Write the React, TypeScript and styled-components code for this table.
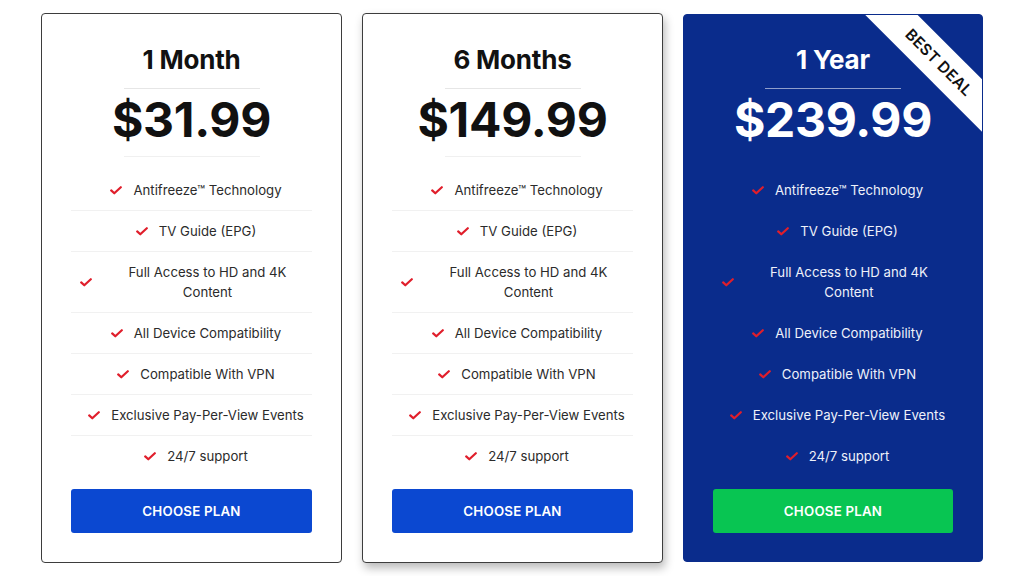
import React from "react";
import styled, { createGlobalStyle, css } from "styled-components";

const Global = createGlobalStyle`
  html, body { margin: 0; padding: 0; background: #ffffff; }
  body { font-family: Inter, "Noto Sans", "Liberation Sans", sans-serif; -webkit-font-smoothing: antialiased; }
  * { box-sizing: border-box; }
`;

const Page = styled.div`
  width: 1024px;
  height: 576px;
  padding-top: 13px;
  display: flex;
  justify-content: center;
`;

const Grid = styled.div`
  display: grid;
  grid-template-columns: 301px 301px 300px;
  column-gap: 20px;
  align-items: start;
`;

const Card = styled.div<{ $featured?: boolean; $raised?: boolean }>`
  position: relative;
  overflow: hidden;
  height: 550px;
  border-radius: 4px;
  border: 1px solid #3d3d3d;
  background: #ffffff;
  color: #111;
  padding: 30px 29px 29px;
  display: flex;
  flex-direction: column;
  align-items: center;
  ${(p) =>
    p.$raised &&
    css`
      box-shadow: 2px 5px 10px rgba(0, 0, 0, 0.28);
    `}
  ${(p) =>
    p.$featured &&
    css`
      background: #0a2c8c;
      border-color: #0a2c8c;
      color: #fff;
      margin-top: 1px;
      height: 548px;
      padding-top: 29px;
    `}
`;

const Title = styled.div`
  flex: none;
  font-size: 26px;
  font-weight: 700;
  line-height: 32px;
  letter-spacing: -0.2px;
`;

const Divider = styled.div<{ $featured?: boolean }>`
  flex: none;
  width: 136px;
  height: 1px;
  background: ${(p) => (p.$featured ? "rgba(255,255,255,0.55)" : "#e6e6e6")};
`;

const TopDivider = styled(Divider)`
  margin-top: 12px;
`;

const PriceDivider = styled(Divider)`
  margin-top: 8px;
  background: ${(p) => (p.$featured ? "transparent" : "#f0f0f0")};
`;

const Price = styled.div`
  flex: none;
  font-size: 48px;
  font-weight: 700;
  line-height: 56px;
  margin-top: 3px;
  letter-spacing: -0.3px;
`;

const List = styled.ul`
  flex: none;
  list-style: none;
  margin: 13px 0 0;
  padding: 0;
  width: 100%;
`;

const Row = styled.li<{ $featured?: boolean; $last?: boolean }>`
  display: flex;
  align-items: center;
  justify-content: center;
  gap: 11px;
  padding: 10px 0 10px 9px;
  font-size: 13.2px;
  line-height: 20px;
  color: ${(p) => (p.$featured ? "#eef1fa" : "#2b2b2b")};
  border-bottom: 1px solid
    ${(p) => (p.$last ? "transparent" : p.$featured ? "transparent" : "#f1f1f1")};
`;

const RowText = styled.span`
  text-align: center;
`;

const Check = styled.svg`
  flex: none;
  width: 12px;
  height: 9px;
`;

const Button = styled.button<{ $featured?: boolean }>`
  flex: none;
  margin-top: 12px;
  width: 100%;
  height: 44px;
  border: none;
  border-radius: 3px;
  background: ${(p) => (p.$featured ? "#08c552" : "#0b48d1")};
  color: #fff;
  font-family: inherit;
  font-size: 13.3px;
  font-weight: 600;
  letter-spacing: 0.2px;
  cursor: pointer;
`;

const Ribbon = styled.div`
  position: absolute;
  left: 162px;
  top: 29px;
  width: 186px;
  height: 37px;
  background: #ffffff;
  color: #111;
  transform: rotate(45deg);
  display: flex;
  align-items: center;
  justify-content: center;
  font-size: 15.5px;
  font-weight: 600;
  letter-spacing: 0.3px;
`;

const features = [
  "Antifreeze™ Technology",
  "TV Guide (EPG)",
  "Full Access to HD and 4K Content",
  "All Device Compatibility",
  "Compatible With VPN",
  "Exclusive Pay-Per-View Events",
  "24/7 support",
];

const plans = [
  { title: "1 Month", price: "$31.99" },
  { title: "6 Months", price: "$149.99", raised: true },
  { title: "1 Year", price: "$239.99", featured: true },
];

const CheckIcon = () => (
  <Check viewBox="0 0 12 9">
    <path d="M1.2 4.4 L4.3 7.3 L10.8 1.2" fill="none" stroke="#e01e2b" strokeWidth="2.2" strokeLinecap="round" strokeLinejoin="round" />
  </Check>
);

export default function App() {
  return (
    <>
      <Global />
      <Page>
        <Grid>
          {plans.map((p) => (
            <Card key={p.title} $featured={p.featured} $raised={p.raised}>
              {p.featured && <Ribbon>BEST DEAL</Ribbon>}
              <Title>{p.title}</Title>
              <TopDivider $featured={p.featured} />
              <Price>{p.price}</Price>
              <PriceDivider $featured={p.featured} />
              <List>
                {features.map((f, i) => (
                  <Row key={f} $featured={p.featured} $last={i === features.length - 1}>
                    <CheckIcon />
                    <RowText>{f}</RowText>
                  </Row>
                ))}
              </List>
              <Button $featured={p.featured}>CHOOSE PLAN</Button>
            </Card>
          ))}
        </Grid>
      </Page>
    </>
  );
}
